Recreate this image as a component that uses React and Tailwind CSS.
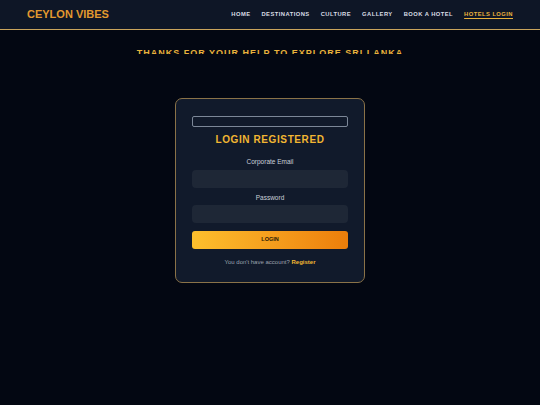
export default function App() {
  const nav = ["HOME", "DESTINATIONS", "CULTURE", "GALLERY", "BOOK A HOTEL"];
  return (
    <div className="w-[540px] h-[405px] bg-[#030712] overflow-hidden" style={{ fontFamily: '"Liberation Sans", Arial, sans-serif' }}>
      <header className="h-[30px] bg-[#0e1626] border-b border-[#c9a45c] flex items-center justify-between pl-[27px] pr-[27px]">
        <div className="text-[11px] font-bold text-[#e3992f] leading-none">CEYLON VIBES</div>
        <nav className="flex items-center gap-[11px] text-[5.8px] font-bold tracking-[0.45px] leading-none">
          {nav.map((n) => (
            <span key={n} className="text-[#d9dde5]">{n}</span>
          ))}
          <span className="text-[#e9b23c] underline underline-offset-[2px] decoration-[0.8px]">HOTELS LOGIN</span>
        </nav>
      </header>
      <div className="h-[24px] overflow-hidden flex justify-center">
        <div className="pt-[19px] text-[9px] font-semibold tracking-[1px] text-[#e9b23c] leading-none whitespace-nowrap">THANKS FOR YOUR HELP TO EXPLORE SRI LANKA</div>
      </div>
      <div className="flex justify-center pt-[44px]">
        <div className="w-[190px] h-[185px] bg-[#111a2b] border border-[#8a7248] rounded-[7px] px-[16px] pt-[17px]">
          <div className="h-[11px] border border-[#7c8798] rounded-[2px]"></div>
          <div className="mt-[8px] text-center text-[10px] font-bold tracking-[0.6px] text-[#f2b632] leading-none">LOGIN REGISTERED</div>
          <div className="mt-[14px] text-center text-[6.5px] text-[#c9d0da] leading-none">Corporate Email</div>
          <div className="mt-[4px] h-[18px] bg-[#1e2736] rounded-[4px]"></div>
          <div className="mt-[7px] text-center text-[6.5px] text-[#c9d0da] leading-none">Password</div>
          <div className="mt-[4px] h-[18px] bg-[#1e2736] rounded-[4px]"></div>
          <div className="mt-[8px] h-[18px] rounded-[3px] bg-gradient-to-r from-[#fdbf2d] to-[#ec7e0a] flex items-center justify-center text-[5.5px] font-bold text-[#2a1a05] leading-none">LOGIN</div>
          <div className="mt-[10px] text-center text-[6px] text-[#9ca3af] leading-none">
            You don't have account? <span className="font-bold text-[#f2b632]">Register</span>
          </div>
        </div>
      </div>
    </div>
  );
}
